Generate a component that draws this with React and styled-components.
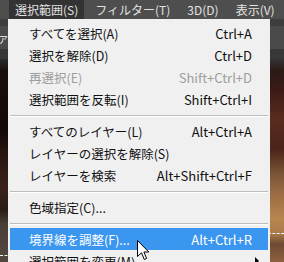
import React from 'react';
import styled, { createGlobalStyle } from 'styled-components';

const Global = createGlobalStyle`
  html, body { margin:0; padding:0; }
  body {
    width:284px;
    height:262px;
    overflow:hidden;
    background:#2e2e2e;
    font-family:"Noto Sans CJK JP", "Noto Sans", sans-serif;
  }
`

const items = [
  { label: 'すべてを選択(A)', key: 'Ctrl+A' },
  { label: '選択を解除(D)', key: 'Ctrl+D' },
  { label: '再選択(E)', key: 'Shift+Ctrl+D', disabled: true },
  { label: '選択範囲を反転(I)', key: 'Shift+Ctrl+I' },
  { sep: true },
  { label: 'すべてのレイヤー(L)', key: 'Alt+Ctrl+A' },
  { label: 'レイヤーの選択を解除(S)' },
  { label: 'レイヤーを検索', key: 'Alt+Shift+Ctrl+F' },
  { sep: true },
  { label: '色域指定(C)...' },
  { sep: true },
  { label: '境界線を調整(F)...', key: 'Alt+Ctrl+R', active: true },
  { label: '選択範囲を変更(M)...', sub: true },
]

const menus = ['選択範囲(S)', 'フィルター(T)', '3D(D)', '表示(V)']

const App = () => {
  return (
    <Screen>
      <Global />
      <MenuBar>
        {menus.map((m, i) => (
          <MenuTitle key={m} $open={i === 0}>{m}</MenuTitle>
        ))}
      </MenuBar>
      <OptionsBar />
      <TabBar><TabLabel>ァ</TabLabel></TabBar>
      <TabGap />
      <Canvas>
        <LeftPhoto>
          <Ants $top={196} />
        </LeftPhoto>
        <RightPhoto>
          <Ants $top={174} />
        </RightPhoto>
      </Canvas>

      <Dropdown>
        {items.map((it, i) =>
          it.sep ? (
            <Separator key={i} />
          ) : (
            <Row key={i} $active={it.active} $disabled={it.disabled}>
              <Label>{it.label}</Label>
              {it.key && <Shortcut>{it.key}</Shortcut>}
              {it.sub && <SubArrow />}
            </Row>
          )
        )}
      </Dropdown>

      <Cursor width="13" height="21" viewBox="0 0 13 21">
        <path d="M0.5 0.5 L0.5 16.5 L4.5 12.8 L7.3 19.5 L9.6 18.5 L6.9 12 L11.8 12 Z"
          fill="#fff" stroke="#000" strokeWidth="1" strokeLinejoin="miter" />
      </Cursor>
    </Screen>
  )
}

const Screen = styled.div`
  position:relative;
  width:284px;
  height:262px;
  overflow:hidden;
  display:flex;
  flex-direction:column;
  background:#2e2e2e;
`
const MenuBar = styled.div`
  display:flex;
  gap:5px;
  height:19px;
  padding-left:9px;
  background:#4e4e4e;
  flex-shrink:0;
`
const MenuTitle = styled.div`
  padding:0 6px;
  line-height:19px;
  font-size:12px;
  color:#e2e2e2;
  white-space:nowrap;
  background:${p => p.$open ? '#333333' : 'transparent'};
`
const OptionsBar = styled.div`
  height:7px;
  background:#3d3d3d;
  flex-shrink:0;
`
const TabBar = styled.div`
  height:23px;
  background:#4a4a4a;
  display:flex;
  align-items:center;
  flex-shrink:0;
`
const TabLabel = styled.span`
  margin-left:-3px;
  font-size:12px;
  color:#d8d8d8;
`
const TabGap = styled.div`
  height:10px;
  background:#383838;
  flex-shrink:0;
`
const Canvas = styled.div`
  flex:1;
  display:flex;
  justify-content:space-between;
  background:#1a1210;
`
const LeftPhoto = styled.div`
  position:relative;
  width:12px;
  background:linear-gradient(180deg,
    #2b2b2b 0px, #1a0f0c 12px, #120907 70px, #2c1812 100px,
    #3a2219 130px, #2a1a14 150px, #4a3e38 165px, #534840 204px);
`
const RightPhoto = styled.div`
  position:relative;
  width:16px;
  background:linear-gradient(180deg,
    #333333 0px, #2a1a16 12px, #3a1a14 30px, #5a2c20 60px,
    #4a2418 90px, #7a5536 115px, #9b6c44 135px, #b8864f 160px,
    #a97a4a 175px, #6e4a32 185px, #8f6240 204px);
`
const Ants = styled.div`
  position:absolute;
  left:0;
  right:0;
  top:${p => p.$top}px;
  border-top:1px dashed #f4f4f4;
`
const Dropdown = styled.div`
  position:absolute;
  top:19px;
  left:8px;
  width:262px;
  padding-top:3px;
  padding-bottom:4px;
  background:#f0f0f0;
  font-size:12.5px;
`
const Row = styled.div`
  display:flex;
  align-items:center;
  height:22px;
  margin:0 2px;
  padding:0 16px 0 19px;
  white-space:nowrap;
  color:${p => p.$active ? '#ffffff' : p.$disabled ? '#9d9d9d' : '#111111'};
  background:${p => p.$active ? '#3b96f0' : 'transparent'};
`
const Label = styled.span`
  flex:1;
`
const Shortcut = styled.span`
  text-align:right;
  font-size:13px;
`
const SubArrow = styled.span`
  width:0;
  height:0;
  margin-right:-7px;
  border-top:4px solid transparent;
  border-bottom:4px solid transparent;
  border-left:4px solid #000;
`
const Separator = styled.div`
  height:10px;
  margin:0 2px;
  display:flex;
  flex-direction:column;
  justify-content:center;
  &::before {
    content:"";
    display:block;
    height:1px;
    background:#bdbdbd;
    box-shadow:0 1px 0 #ffffff;
  }
`
const Cursor = styled.svg`
  position:absolute;
  left:137px;
  top:240px;
`

export default App
